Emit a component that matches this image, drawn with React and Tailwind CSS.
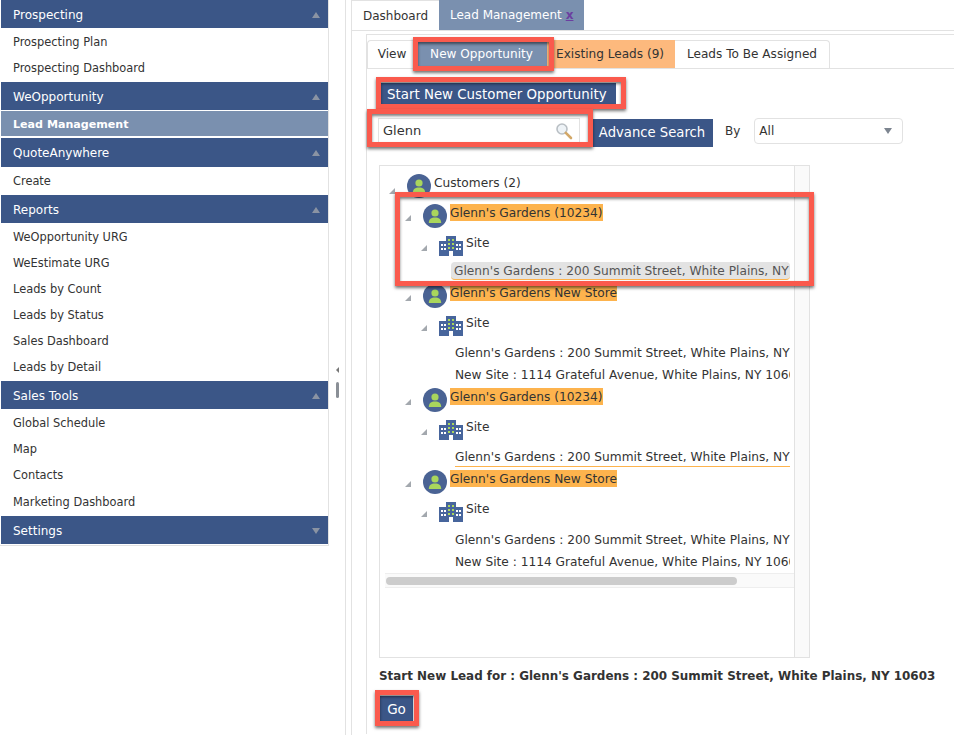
import React from 'react';

const PersonIcon = () => (
  <svg width="24" height="24" viewBox="0 0 24 24" className="shrink-0">
    <circle cx="12" cy="12" r="12" fill="#4a6394" />
    <circle cx="12" cy="9" r="3.6" fill="#a9d65c" />
    <path d="M5.8 19c0-3.6 2.4-5.4 6.2-5.4s6.2 1.8 6.2 5.4z" fill="#a9d65c" />
  </svg>
);

const SiteIcon = () => (
  <svg width="24" height="20" viewBox="0 0 24 20" className="shrink-0">
    <path d="M7 0h10v5h7v15H0V5h7z" fill="#47659c" />
    <g fill="#a9d65c">
      <rect x="9" y="3" width="2" height="2" /><rect x="13" y="3" width="2" height="2" />
      <rect x="9" y="7" width="2" height="2" /><rect x="13" y="7" width="2" height="2" />
      <rect x="9" y="11" width="2" height="2" /><rect x="13" y="11" width="2" height="2" />
    </g>
    <g fill="#fff">
      <rect x="2" y="8" width="2" height="2" /><rect x="5" y="8" width="2" height="2" />
      <rect x="17" y="8" width="2" height="2" /><rect x="20" y="8" width="2" height="2" />
      <rect x="2" y="12" width="2" height="2" /><rect x="5" y="12" width="2" height="2" />
      <rect x="17" y="12" width="2" height="2" /><rect x="20" y="12" width="2" height="2" />
      <rect x="10" y="15" width="4" height="5" />
    </g>
  </svg>
);

const Arrow = () => (
  <span className="shrink-0 w-0 h-0 mt-[4px] border-l-[6px] border-l-transparent border-b-[6px] border-b-[#a3a8ae]" />
);

const Section = ({ title, open = true, rowClass = 'h-[28px]' }) => (
  <div className={`${rowClass} bg-[#3b5687] flex items-center justify-between pt-[1px] pl-[12px] pr-[8px] text-white text-[12px]`}>
    <span>{title}</span>
    {open
      ? <span className="w-0 h-0 border-x-[4px] border-x-transparent border-b-[6px] border-b-[#8a93a3]" />
      : <span className="w-0 h-0 border-x-[4px] border-x-transparent border-t-[6px] border-t-[#8a93a3]" />}
  </div>
);

const Item = ({ children, rowClass = 'h-[26px] pt-[3px]' }) => (
  <div className={`${rowClass} flex items-center pl-[12px] text-[11.4px] text-[#333]`}>{children}</div>
);

const Customer = ({ name, extra = '' }) => (
  <div className={`h-[24px] flex items-center ${extra}`}>
    <Arrow />
    <span className="ml-[12px]"><PersonIcon /></span>
    <span className="bg-[#fdb34d] ml-[3px] self-start h-[17px] pt-px leading-[16px]">{name}</span>
  </div>
);

const Site = ({ extra = 'mt-[8px]' }) => (
  <div className={`h-[20px] flex items-center ml-[16px] ${extra}`}>
    <Arrow />
    <span className="ml-[12px]"><SiteIcon /></span>
    <span className="ml-[3px] self-start -mt-[2px]">Site</span>
  </div>
);

const Address = ({ children, extra = '' }) => (
  <div className={`h-[22px] flex items-center ml-[50px] whitespace-nowrap ${extra}`}>{children}</div>
);

const Annot = ({ className }) => (
  <div className={`absolute border-[5px] border-[#fa5a4d] shadow-[0_2px_3px_rgba(0,0,0,0.55),inset_0_2px_3px_rgba(0,0,0,0.5)] pointer-events-none ${className}`} />
);

export default function App() {
  return (
    <div className="relative w-[954px] h-[735px] overflow-hidden bg-white flex font-['DejaVu_Sans',Verdana,sans-serif] text-[#333]">
      {/* Sidebar */}
      <div className="w-[329px] h-[546px] shrink-0 pl-px border-r border-r-[#e2e2e2] border-b border-b-[#e2e2e2]">
        <Section title="Prospecting" />
        <Item>Prospecting Plan</Item>
        <Item rowClass="h-[27px] pt-[2px] mb-px">Prospecting Dashboard</Item>
        <Section title="WeOpportunity" />
        <div className="h-[25px] mt-px mb-[2px] pt-[3px] bg-[#7a90af] flex items-center pl-[12px] text-white font-bold text-[11.1px]">Lead Management</div>
        <Section title="QuoteAnywhere" rowClass="h-[29px]" />
        <Item rowClass="h-[27px] pt-[2px] mb-px">Create</Item>
        <Section title="Reports" />
        <Item>WeOpportunity URG</Item>
        <Item>WeEstimate URG</Item>
        <Item>Leads by Count</Item>
        <Item>Leads by Status</Item>
        <Item>Sales Dashboard</Item>
        <Item rowClass="h-[26px] pt-[3px] mb-[2px]">Leads by Detail</Item>
        <Section title="Sales Tools" />
        <Item rowClass="h-[26px] pt-[3px]">Global Schedule</Item>
        <Item rowClass="h-[26px] pt-[3px]">Map</Item>
        <Item rowClass="h-[26px] pt-[3px]">Contacts</Item>
        <Item rowClass="h-[29px] pt-[3px]">Marketing Dashboard</Item>
        <Section title="Settings" open={false} />
      </div>

      {/* Splitter */}
      <div className="w-[17px] shrink-0 border-r border-r-[#e2e2e2] flex flex-col items-center pt-[367px]">
        <span className="w-0 h-0 border-y-[3px] border-y-transparent border-r-[3px] border-r-[#777]" />
        <span className="w-[3px] h-[16px] mt-[9px] bg-[#8a8f96] rounded-sm" />
      </div>

      {/* Main */}
      <div className="flex-1 pl-[5px] min-w-0">
        <div className="flex h-[30px] border-l border-l-[#e2e2e2] text-[12px]">
          <div className="w-[87px] flex items-center justify-center border-t border-t-[#e2e2e2] text-[#333]">Dashboard</div>
          <div className="w-[145px] flex items-center pl-[11px] bg-[#7a90af] text-white">
            Lead Management <span className="text-[#6b3fa0] font-bold underline ml-[4px]">x</span>
          </div>
        </div>
        <div className="border-t border-t-[#e2e2e2] border-l border-l-[#e2e2e2] pl-[14px] h-[705px] pt-[3px]">
          <div className="border-t border-t-[#e2e2e2] border-l border-l-[#e2e2e2] h-[700px]">
            {/* Inner tabs */}
            <div className="flex h-[29px] mt-[5px] border-b border-b-[#e2e2e2] text-[12.1px]">
              <div className="w-[49px] flex items-center justify-center border-t border-l border-[#e2e2e2] rounded-tl">View</div>
              <div className="w-[131px] flex items-center justify-center bg-[#7a90af] text-white">New Opportunity</div>
              <div className="w-[128px] flex items-center pl-[9px] bg-[#fdb97d]">Existing Leads (9)</div>
              <div className="w-[155px] flex items-center justify-center border-t border-r border-[#e2e2e2] rounded-tr">Leads To Be Assigned</div>
            </div>

            <div className="pl-[12px]">
              <div className="mt-[14px] w-[237px] h-[24px] bg-[#3b5687] text-white text-[13.36px] flex items-center pl-[8px] whitespace-nowrap">Start New Customer Opportunity</div>

              <div className="flex items-start mt-[11px] -ml-[1px]">
                <div className="w-[202px] h-[26px] border border-[#e2e2e2] flex items-center justify-between pl-[4px] pr-[6px] text-[13px]">
                  Glenn
                  <svg width="18" height="18" viewBox="0 0 18 18">
                    <circle cx="7" cy="7" r="5" fill="#eef3f7" stroke="#b9bfc4" strokeWidth="1.6" />
                    <path d="M10.8 10.8 16 16" stroke="#d3a868" strokeWidth="2.6" strokeLinecap="round" />
                  </svg>
                </div>
                <div className="ml-[11px] mt-px w-[122px] h-[28px] bg-[#3b5687] text-white text-[13.2px] flex items-center justify-center whitespace-nowrap">Advance Search</div>
                <div className="ml-[12px] text-[12px] mt-[4px]">By</div>
                <div className="ml-[14px] w-[149px] h-[26px] border border-[#e2e2e2] rounded flex items-center justify-between pl-[4px] pr-[10px] text-[12px]">
                  All
                  <span className="w-0 h-0 border-x-[4px] border-x-transparent border-t-[6px] border-t-[#7d8590]" />
                </div>
              </div>

              {/* Tree */}
              <div className="mt-[18px] w-[431px] h-[493px] border border-[#e2e2e2] flex text-[12.2px] text-[#333]">
                <div className="w-[415px] shrink-0 border-r border-r-[#e2e2e2] pl-[9px] pt-[8px] overflow-hidden">
                  <div className="h-[30px] flex items-start">
                    <span className="mt-[10px] flex"><Arrow /></span>
                    <span className="ml-[12px]"><PersonIcon /></span>
                    <span className="ml-[3px]">Customers (2)</span>
                  </div>
                  <div className="ml-[16px] overflow-hidden w-[385px]">
                    <Customer name="Glenn's Gardens (10234)" />
                    <Site />
                    <div className="h-[18px] mt-[6px] ml-[46px] pt-px bg-[#e3e3e3] rounded-sm border-b border-b-[#fdb34d] flex items-center pl-[3px] whitespace-nowrap text-[#555] overflow-hidden">Glenn's Gardens : 200 Summit Street, White Plains, NY 10603</div>
                    <Customer name="Glenn's Gardens New Store" extra="mt-[4px]" />
                    <Site />
                    <Address extra="mt-[6px]">Glenn's Gardens : 200 Summit Street, White Plains, NY 10603</Address>
                    <Address>New Site : 1114 Grateful Avenue, White Plains, NY 10601</Address>
                    <Customer name="Glenn's Gardens (10234)" extra="mt-[2px]" />
                    <Site />
                    <Address extra="!h-[18px] mt-[9px] border-b border-b-[#fdb34d] overflow-hidden">Glenn's Gardens : 200 Summit Street, White Plains, NY 10603</Address>
                    <Customer name="Glenn's Gardens New Store" extra="mt-[3px]" />
                    <Site />
                    <Address extra="mt-[7px]">Glenn's Gardens : 200 Summit Street, White Plains, NY 10603</Address>
                    <Address>New Site : 1114 Grateful Avenue, White Plains, NY 10601</Address>
                  </div>
                  <div className="-ml-[4px] w-[410px] h-[15px] border-y border-y-[#eeeeee] bg-[#fafafa] flex items-center pl-px">
                    <div className="w-[351px] h-[8px] rounded bg-[#cccccc]" />
                  </div>
                </div>
                <div className="flex-1 bg-[#fafafa]" />
              </div>

              <div className="mt-[10px] font-bold text-[11.95px] text-[#333] whitespace-nowrap">Start New Lead for : Glenn's Gardens : 200 Summit Street, White Plains, NY 10603</div>
              <div className="mt-[10px] w-[33px] h-[26px] ml-px bg-[#3b5687] text-white text-[13.5px] flex items-center justify-center">Go</div>
            </div>
          </div>
        </div>
      </div>

      {/* Annotations */}
      <Annot className="left-[413px] top-[37px] w-[141px] h-[34px]" />
      <Annot className="left-[376px] top-[77px] w-[250px] h-[32px]" />
      <Annot className="left-[367px] top-[109px] w-[226px] h-[38px]" />
      <Annot className="left-[395px] top-[192px] w-[419px] h-[94px]" />
      <Annot className="left-[375px] top-[690px] w-[44px] h-[36px]" />
    </div>
  );
}
